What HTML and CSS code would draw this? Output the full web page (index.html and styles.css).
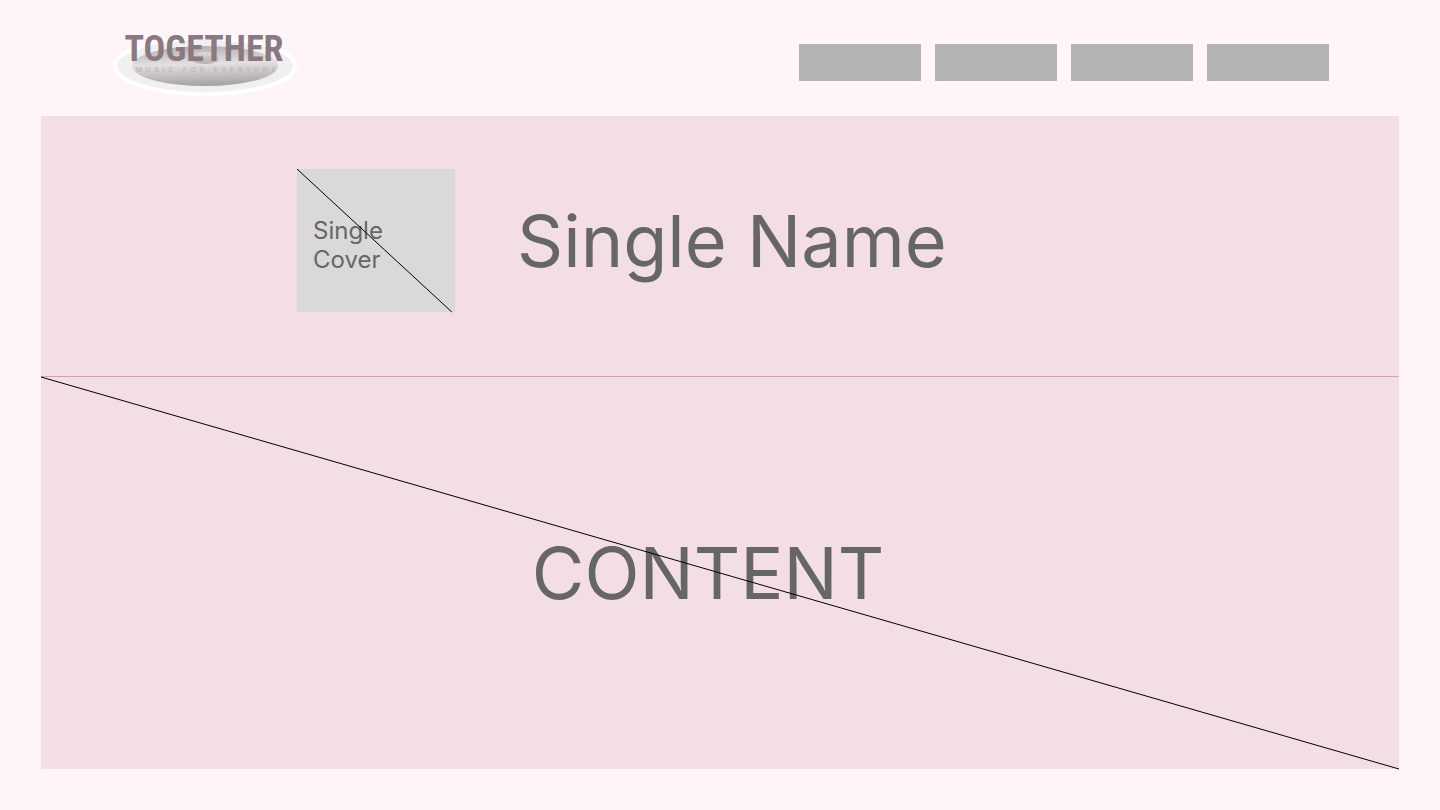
FILE: index.html
```html
<!DOCTYPE html>
<html lang="en">
<head>
<meta charset="utf-8">
<meta name="viewport" content="width=device-width, initial-scale=1">
<title>Together</title>
<link rel="stylesheet" href="styles.css">
</head>
<body>
<header class="site-header">
  <a class="logo" href="#" aria-label="Together, music for everyone">
    <svg class="logo-art" viewBox="0 0 184 72" width="184" height="72">
      <defs>
        <linearGradient id="disc" x1="0.4" y1="0" x2="0.5" y2="1">
          <stop offset="0" stop-color="#b2b0b1"/>
          <stop offset="0.45" stop-color="#e2e0e1"/>
          <stop offset="1" stop-color="#a3a1a2"/>
        </linearGradient>
        <linearGradient id="hole" x1="0" y1="0" x2="0" y2="1">
          <stop offset="0" stop-color="#dad8d9"/>
          <stop offset="1" stop-color="#b0aeaf"/>
        </linearGradient>
      </defs>
      <ellipse cx="92" cy="42" rx="90" ry="28" fill="#f0f0f0" stroke="#ffffff" stroke-width="4"/>
      <ellipse cx="92" cy="42" rx="73" ry="20" fill="url(#disc)"/>
      <ellipse cx="92" cy="34" rx="14" ry="6" fill="url(#hole)"/>
      <text class="logo-name" x="91" y="37" text-anchor="middle">TOGETHER</text>
      <text class="logo-tagline" x="95" y="48" text-anchor="middle">MUSIC FOR EVERYONE</text>
    </svg>
  </a>
  <nav class="site-nav" aria-label="Main">
    <a class="nav-item" href="#" aria-label="Page 1"></a>
    <a class="nav-item" href="#" aria-label="Page 2"></a>
    <a class="nav-item" href="#" aria-label="Page 3"></a>
    <a class="nav-item" href="#" aria-label="Page 4"></a>
  </nav>
</header>
<main class="page">
  <section class="single">
    <div class="cover">
      <p class="cover-label">Single Cover</p>
      <svg class="diagonal" viewBox="0 0 100 100" preserveAspectRatio="none" aria-hidden="true"><line x1="0" y1="0" x2="98" y2="100"/></svg>
    </div>
    <h1 class="title">Single Name</h1>
  </section>
  <section class="content">
    <h2 class="title">CONTENT</h2>
    <svg class="diagonal" viewBox="0 0 100 100" preserveAspectRatio="none" aria-hidden="true"><line x1="0" y1="0" x2="100" y2="100"/></svg>
  </section>
</main>
</body>
</html>
```
FILE: styles.css
```css
* { box-sizing: border-box; }

body {
  margin: 0;
  background: #fff4f7;
  color: #666666;
  font-family: Inter, "Liberation Sans", sans-serif;
}

.site-header {
  display: flex;
  justify-content: space-between;
  align-items: center;
  padding: 24px 111px 20px 113px;
}

.logo,
.logo-art { display: block; }

.logo-name {
  fill: #8c7880;
  font-family: "Roboto Condensed", "Liberation Sans Narrow", Roboto, sans-serif;
  font-size: 36px;
  font-weight: 700;
}

.logo-tagline {
  fill: #dba5b7;
  font-family: "Roboto Condensed", "Liberation Sans Narrow", Roboto, sans-serif;
  font-size: 8px;
  letter-spacing: 4px;
}

.site-nav {
  display: flex;
  gap: 14px;
  padding-top: 4px;
}

.nav-item {
  width: 122px;
  height: 37px;
  background: #b4b4b4;
}

.page {
  margin: 0 41px 41px;
  background: #f2dee4;
}

.single {
  display: flex;
  align-items: center;
  gap: 62px;
  padding: 53px 32px 64px 256px;
  border-bottom: 1px solid #d69fb5;
}

.cover {
  position: relative;
  width: 158px;
  padding: 47px 16px 38px;
  background: #d9d9d9;
}

.cover-label {
  margin: 0;
  font-size: 24px;
  line-height: 29px;
}

.title {
  margin: 0;
  font-size: 72px;
  font-weight: 400;
  line-height: 88px;
}

.content {
  position: relative;
  padding: 152px 24px 152px 0;
  text-align: center;
}

.diagonal {
  position: absolute;
  inset: 0;
  width: 100%;
  height: 100%;
  overflow: visible;
  pointer-events: none;
}

.diagonal line {
  stroke: #000000;
  stroke-width: 1px;
  vector-effect: non-scaling-stroke;
}
```
